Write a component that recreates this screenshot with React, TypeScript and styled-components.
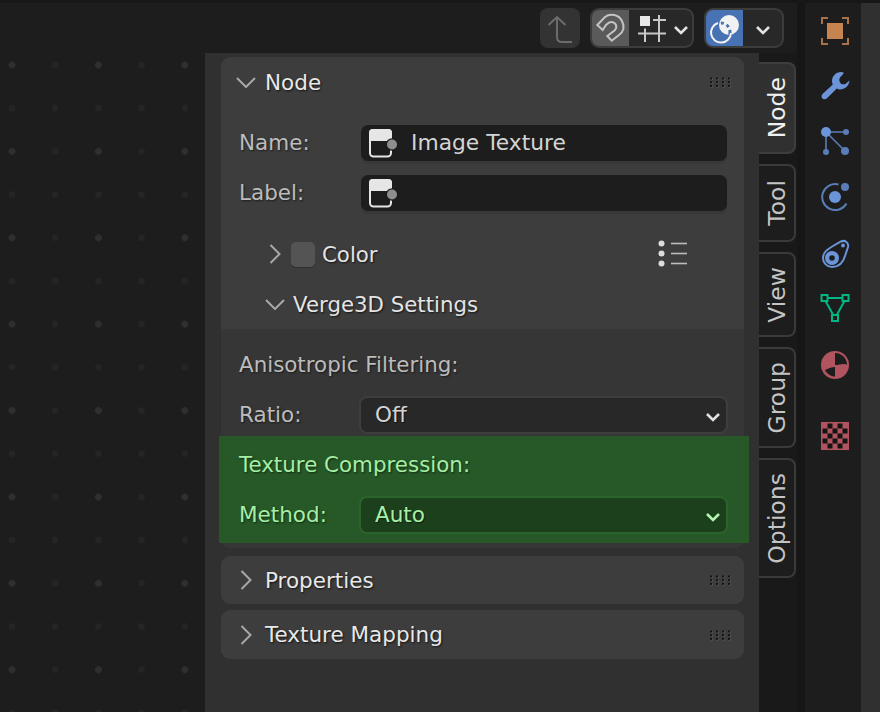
import React from "react";
import styled, { createGlobalStyle } from "styled-components";

const Global = createGlobalStyle`
  html, body { margin: 0; padding: 0; background: #1d1d1d; overflow: hidden; }
  #root { width: 880px; height: 712px; }
`;

const Screen = styled.div`
  width: 880px; height: 712px; display: flex; flex-direction: column; overflow: hidden;
  background: #1d1d1d; font-family: "DejaVu Sans", sans-serif; font-size: 21.5px; color: #d8d8d8;
`;
const TopLine = styled.div`height: 3px; flex: none; background: #171717;`;
const Workspace = styled.div`flex: 1; display: flex; min-height: 0;`;
const Editor = styled.div`width: 797px; flex: none; display: flex; flex-direction: column;`;
const Header = styled.div`
  height: 50px; flex: none; display: flex; justify-content: flex-end; align-items: flex-start;
  padding: 5px 13px 0 0; box-sizing: border-box; gap: 10px;
`;
const Body = styled.div`flex: 1; display: flex; min-height: 0;`;
const Canvas = styled.div`
  width: 205px; flex: none;
  background-color: #1d1d1d;
  background-image:
    radial-gradient(circle, #2f2f2f 3px, transparent 3.6px),
    radial-gradient(circle, #252525 3px, transparent 3.6px);
  background-size: 86.4px 86.4px, 43.2px 43.2px;
  background-position: -31.2px -31.2px, -9.6px -9.6px;
`;
const Sidebar = styled.div`
  width: 554px; flex: none; background: #303030; box-sizing: border-box;
  padding: 4px 15px 0 16px; display: flex; flex-direction: column;
`;
const Card = styled.section<{ $mt?: number }>`
  background: #3d3d3d; border-radius: 9px; margin-top: ${p => p.$mt ?? 0}px;
  display: flex; flex-direction: column;
`;
const CardHead = styled.div<{ $h: number }>`
  height: ${p => p.$h}px; display: flex; align-items: center; position: relative;
  color: #e8e8e8; text-shadow: 1px 1px 2px rgba(0,0,0,.7);
`;
const ChevronSlot = styled.span`
  width: 44px; flex: none; box-sizing: border-box; padding-left: 6px;
  display: flex; justify-content: center; align-items: center;
`;
const CardBody = styled.div`padding: 18px 17px 0 18px; display: flex; flex-direction: column; gap: 14px;`;
const FormRow = styled.div`display: flex; align-items: center; height: 36px;`;
const Label = styled.span<{ $green?: boolean }>`
  width: 122px; flex: none; margin-bottom: 2px; color: ${p => (p.$green ? "#a6eea6" : "#bcbcbc")};
  text-shadow: 1px 1px 2px rgba(0,0,0,.55);
`;
const TextField = styled.div`
  flex: 1; height: 36px; border-radius: 7px; background: #1d1d1d;
  box-shadow: 0 3px 0 #383838; display: flex; align-items: center; padding-left: 6px; gap: 12px;
  color: #d4d4d4;
`;
const FieldText = styled.span`margin-bottom: 2px; font-size: 21.8px;`;
const Tree = styled.div<{ $mt: number }>`
  display: flex; align-items: center; height: 36px; margin-top: ${p => p.$mt}px; font-size: 21.3px;
  padding-left: 35px; color: #e4e4e4; text-shadow: 1px 1px 2px rgba(0,0,0,.7);
`;
const TreeSlot = styled.span`width: 37px; flex: none; display: flex; justify-content: center; align-items: center;`;
const Swatch = styled.span`
  width: 24px; height: 25px; border-radius: 5px; background: #545454; margin: 0 7px 0 -2px;
  box-shadow: 0 1px 0 #303030;
`;
const ListIcon = styled.svg`margin-left: auto; margin-right: 56px; flex: none;`;
const Subpanel = styled.div`
  margin-top: 7px; background: #363636; padding-top: 18px; padding-bottom: 5px;
  border-radius: 0 0 9px 9px; display: flex; flex-direction: column;
`;
const Caption = styled.div<{ $green?: boolean }>`
  height: 36px; line-height: 36px; padding-left: 18px; font-size: 21.4px;
  color: ${p => (p.$green ? "#a6eea6" : "#bcbcbc")};
  text-shadow: 1px 1px 2px rgba(0,0,0,.55);
`;
const SelectRow = styled.div<{ $mt: number }>`
  display: flex; align-items: center; padding: 0 16px 0 18px; margin-top: ${p => p.$mt}px;
`;
const Select = styled.div<{ $green?: boolean }>`
  flex: 1; height: 38px; margin-left: -2px; box-sizing: border-box; border-radius: 8px; padding: 0 5px 2px 14px;
  display: flex; align-items: center; justify-content: space-between;
  background: ${p => (p.$green ? "#1c3f1c" : "#282828")};
  border: 2px solid ${p => (p.$green ? "#2b632d" : "#3e3e3e")};
  color: ${p => (p.$green ? "#a6eea6" : "#d4d4d4")};
  text-shadow: 1px 1px 1px rgba(0,0,0,.5);
`;
const SelectArrow = styled.span`display: flex; margin-top: 6px;`;
const GreenBlock = styled.div`
  margin: 2px -5px 0 -2px; padding: 11px 5px 9px 2px; background: #265927;
  display: flex; flex-direction: column;
`;
const Grip = styled.svg`position: absolute; right: 12px; top: 50%; transform: translateY(-50%);`;
const TabColumn = styled.div`
  width: 38px; flex: none; background: #191919; padding-top: 9px; box-sizing: border-box;
  display: flex; flex-direction: column; gap: 10px; align-items: flex-start;
`;
const Tab = styled.div<{ $h: number; $active?: boolean }>`
  width: 37px; height: ${p => p.$h}px; box-sizing: border-box; flex: none;
  border: 2px solid ${p => (p.$active ? "#3d3d3d" : "#3a3a3a")}; border-left: 0; border-radius: 0 8px 8px 0;
  background: ${p => (p.$active ? "#303030" : "#1d1d1d")};
  color: ${p => (p.$active ? "#f0f0f0" : "#c4c4c4")};
  display: flex; align-items: center; justify-content: center; font-size: 23.5px;
`;
const TabText = styled.span`writing-mode: vertical-rl; transform: rotate(180deg); white-space: nowrap;`;
const Gutter = styled.div`width: 8px; flex: none; background: #161616;`;
const Strip = styled.div`width: 56px; flex: none; background: #1d1d1d; display: flex; flex-direction: column;`;
const StripSlot = styled.div<{ $h: number }>`
  height: ${p => p.$h}px; flex: none; display: flex; align-items: center; justify-content: center;
  margin-left: 3px; box-sizing: border-box;
`;
const Scrollbar = styled.div`flex: 1; background: #303030;`;
const IconButton = styled.div`
  width: 40px; height: 40px; border-radius: 8px; background: #333333; box-sizing: border-box;
  display: flex; align-items: center; justify-content: center;
`;
const Group = styled.div`
  display: flex; height: 40px; border-radius: 9px; overflow: hidden; box-sizing: border-box;
  border: 2px solid #3c3c3c; background: #282828;
`;
const Segment = styled.div<{ $bg?: string; $w: number }>`
  width: ${p => p.$w}px; height: 100%; background: ${p => p.$bg ?? "transparent"};
  display: flex; align-items: center; justify-content: center; flex: none;
`;
const MenuSegment = styled.div<{ $w: number; $pl?: number }>`
  width: ${p => p.$w}px; height: 100%; box-sizing: border-box; flex: none;
  padding: 4px 0 0 ${p => p.$pl ?? 0}px; display: flex; align-items: center;
  justify-content: ${p => (p.$pl ? "flex-start" : "center")};
`;

const Chevron = ({ dir, c = "#a8a8a8" }: { dir: "down" | "right"; c?: string }) =>
  dir === "down" ? (
    <svg width="20" height="12" viewBox="0 0 20 12"><polyline points="1,2 10,11 19,2" fill="none" stroke={c} strokeWidth="2" /></svg>
  ) : (
    <svg width="12" height="20" viewBox="0 0 12 20"><polyline points="1.5,1 10.5,10 1.5,19" fill="none" stroke={c} strokeWidth="2" /></svg>
  );

const SmallChevron = ({ c = "#e2e2e2" }: { c?: string }) => (
  <svg width="16" height="10" viewBox="0 0 16 10"><polyline points="2,2 8,8 14,2" fill="none" stroke={c} strokeWidth="2.6" /></svg>
);

const GripDots = () => (
  <Grip width="24" height="14" viewBox="0 0 24 14">
    {[2, 8, 14, 20].flatMap(x =>
      [2.5, 6.2, 9.9].map(y => (
        <React.Fragment key={`${x}-${y}`}>
          <rect x={x + 0.7} y={y + 0.7} width="2" height="2" fill="#5a5a5a" />
          <rect x={x} y={y} width="2" height="2" fill="#141414" />
        </React.Fragment>
      ))
    )}
  </Grip>
);

const NodeFieldIcon = () => (
  <svg width="32" height="32" viewBox="0 0 32 32" style={{ flex: "none" }}>
    <rect x="3" y="3" width="21" height="26.5" rx="3.5" fill="none" stroke="#e6e6e6" strokeWidth="2" />
    <path d="M2 14 V5.5 A3.5 3.5 0 0 1 5.5 2 H21.5 A3.5 3.5 0 0 1 25 5.5 V14 Z" fill="#e6e6e6" />
    <circle cx="25" cy="17.5" r="6.2" fill="#1d1d1d" />
    <circle cx="25" cy="17.5" r="5" fill="#8e8e8e" />
  </svg>
);

const ObjectIcon = () => (
  <svg width="32" height="32" viewBox="0 0 32 32">
    <path d="M9 3 H3 V9 M23 3 H29 V9 M3 23 V29 H9 M29 23 V29 H23" fill="none" stroke="#a8724a" strokeWidth="2" />
    <rect x="8" y="8" width="16" height="16" fill="#c6854e" />
  </svg>
);
const WrenchIcon = () => (
  <svg width="32" height="32" viewBox="0 0 32 32">
    <path d="M22 2 C17 2 13 6 13 11 C13 12.5 13.4 13.6 13.8 14.6 L3.5 24 C2 25.5 2.5 27.5 3.5 28.5 C5 29.8 6.8 29.5 8 28.3 L17.8 18.6 C19 19.2 20 19.5 21 19.5 C26 19.5 30 16 30.5 10.5 L27 13.5 C25 15 22 14.5 21 12.5 C20 10.5 20 8.5 21.5 7 L25 3 C24 2.4 23 2 22 2Z" fill="#6b94d9" />
  </svg>
);
const ParticlesIcon = () => (
  <svg width="32" height="32" viewBox="0 0 32 32" fill="#6b94d9" stroke="#5a7db8">
    <path d="M7 6 H27 M7 6 V26 M7 6 L26 25" strokeWidth="1.6" fill="none" />
    <circle cx="7" cy="6" r="5" stroke="none" />
    <circle cx="27" cy="6" r="3" stroke="none" fill="#5a7db8" />
    <circle cx="7" cy="26" r="3" stroke="none" fill="#5a7db8" />
    <circle cx="26" cy="25" r="4" stroke="none" fill="#5a7db8" />
  </svg>
);
const PhysicsIcon = () => (
  <svg width="32" height="32" viewBox="0 0 32 32">
    <path d="M19.5 4.5 A13 13 0 1 0 27.5 23.5" fill="none" stroke="#5a7db8" strokeWidth="2" />
    <circle cx="16" cy="17" r="6" fill="#6b94d9" />
    <circle cx="26" cy="7" r="4" fill="#5a7db8" />
  </svg>
);
const ConstraintIcon = () => (
  <svg width="32" height="32" viewBox="0 0 32 32">
    <path d="M4 20 C4 14 9 11 14 8 L22 3.5 C26 1.5 30 5 29 9 L26 18 C24 25 19 29 13 29 C8 29 4 25 4 20 Z" fill="none" stroke="#6b94d9" strokeWidth="2" />
    <circle cx="13" cy="20" r="7" fill="#6b94d9" />
    <circle cx="13" cy="20" r="2.8" fill="#1d1d1d" />
    <circle cx="24" cy="7.5" r="2" fill="#6b94d9" />
  </svg>
);
const MeshIcon = () => (
  <svg width="32" height="32" viewBox="0 0 32 32" fill="none" stroke="#00b682" strokeWidth="2">
    <path d="M8 6 H24 M6.5 9 L14.5 23.5 M25.5 9 L17.5 23.5" />
    <rect x="2.5" y="3" width="6" height="6" />
    <rect x="23.5" y="3" width="6" height="6" />
    <rect x="13" y="23" width="6" height="6" />
  </svg>
);
const MaterialIcon = () => (
  <svg width="32" height="32" viewBox="0 0 32 32">
    <circle cx="16" cy="16" r="14" fill="#b0555f" />
    <path d="M16 4 A12 12 0 0 1 28 15.5 C 24 14 20 16 16 16 Z" fill="#1d1d1d" />
    <path d="M6 21 C 10 19 13 18 16 18 L16 27.5 C 12 27.5 8 25 6 21 Z" fill="#1d1d1d" />
  </svg>
);
const TextureIcon = () => {
  const cells: [number, number][] = [];
  for (let r = 0; r < 5; r++) for (let c = 0; c < 5; c++) if ((r + c) % 2 === 1) cells.push([c, r]);
  return (
    <svg width="32" height="32" viewBox="0 0 32 32">
      <rect x="2" y="2" width="28" height="28" fill="#b0555f" />
      {cells.map(([c, r]) => (
        <rect key={`${c}${r}`} x={3.5 + c * 5} y={3.5 + r * 5} width="5" height="5" fill="#141414" />
      ))}
    </svg>
  );
};

const ParentIcon = () => (
  <svg width="40" height="40" viewBox="0 0 40 40" fill="none" stroke="#6c6c6c" strokeWidth="2">
    <path d="M8.5 17 L17 9 L25.5 17 M17 9 V29 Q17 34 22 34 H32" />
  </svg>
);
const MagnetIcon = () => (
  <svg width="38" height="36" viewBox="0 0 38 36" fill="none" stroke="#c4c4c4" strokeWidth="2" style={{ flex: "none" }}>
    <path d="M5.3 15 L13 7 C18 3 27 4.5 30 11 C33 17 31 22 27 25 L19.7 30.7 L15.3 26 L22.5 20.5 C26 17 24 12 19 12 C17 12 16 13 14 15 L10.7 20 Z" />
  </svg>
);
const GridIcon = () => (
  <svg width="32" height="32" viewBox="0 0 32 32" style={{ marginRight: 3, flex: "none" }}>
    <rect x="2" y="2" width="10" height="10" fill="#e8e8e8" />
    <path d="M15 6 H28 M0 19.5 H28 M7 14.5 V28 M21 1 V28" fill="none" stroke="#c8c8c8" strokeWidth="2" />
  </svg>
);
const OverlayIcon = () => (
  <svg width="36" height="36" viewBox="0 0 36 36" style={{ flex: "none" }}>
    <circle cx="22" cy="15" r="10" fill="#f2f2f2" />
    <circle cx="14" cy="22" r="9" fill="none" stroke="#4772b3" strokeWidth="3" strokeDasharray="3 3" />
    <path d="M11 13 A10 10 0 1 0 24 23" fill="none" stroke="#f2f2f2" strokeWidth="2" />
  </svg>
);
const ListGlyph = () => (
  <ListIcon width="30" height="28" viewBox="0 0 30 28">
    {[3.5, 13.5, 23.5].map(y => (
      <React.Fragment key={y}>
        <circle cx="3.5" cy={y} r="3" fill="#dcdcdc" />
        <rect x="13" y={y - 0.8} width="16" height="1.6" fill="#bdbdbd" />
      </React.Fragment>
    ))}
  </ListIcon>
);

const tabs = [
  { t: "Node", h: 92, active: true },
  { t: "Tool", h: 78 },
  { t: "View", h: 85 },
  { t: "Group", h: 101 },
  { t: "Options", h: 120 },
];
const stripIcons: [number, React.ReactNode][] = [
  [55, <ObjectIcon key="a" />],
  [56, <WrenchIcon key="b" />],
  [56, <ParticlesIcon key="c" />],
  [52, <PhysicsIcon key="d" />],
  [64, <ConstraintIcon key="e" />],
  [44, <MeshIcon key="f" />],
  [70, <MaterialIcon key="g" />],
  [72, <TextureIcon key="h" />],
];

export default function App() {
  return (
    <Screen>
      <Global />
      <TopLine />
      <Workspace>
        <Editor>
          <Header>
            <IconButton><ParentIcon /></IconButton>
            <Group>
              <Segment $w={37} $bg="#5a5a5a"><MagnetIcon /></Segment>
              <MenuSegment $w={63} $pl={9}><GridIcon /><SmallChevron /></MenuSegment>
            </Group>
            <Group>
              <Segment $w={37} $bg="#4772b3"><OverlayIcon /></Segment>
              <MenuSegment $w={39}><SmallChevron /></MenuSegment>
            </Group>
          </Header>
          <Body>
            <Canvas />
            <Sidebar>
              <Card>
                <CardHead $h={50}>
                  <ChevronSlot><Chevron dir="down" /></ChevronSlot>
                  Node
                  <GripDots />
                </CardHead>
                <CardBody>
                  <FormRow>
                    <Label>Name:</Label>
                    <TextField><NodeFieldIcon /><FieldText>Image Texture</FieldText></TextField>
                  </FormRow>
                  <FormRow>
                    <Label>Label:</Label>
                    <TextField><NodeFieldIcon /></TextField>
                  </FormRow>
                </CardBody>
                <Tree $mt={25}>
                  <TreeSlot><Chevron dir="right" /></TreeSlot>
                  <Swatch />
                  Color
                  <ListGlyph />
                </Tree>
                <Tree $mt={14}>
                  <TreeSlot><Chevron dir="down" /></TreeSlot>
                  Verge3D Settings
                </Tree>
                <Subpanel>
                  <Caption>Anisotropic Filtering:</Caption>
                  <SelectRow $mt={13}>
                    <Label>Ratio:</Label>
                    <Select>Off<SelectArrow><SmallChevron /></SelectArrow></Select>
                  </SelectRow>
                  <GreenBlock>
                    <Caption $green>Texture Compression:</Caption>
                    <SelectRow $mt={13}>
                      <Label $green>Method:</Label>
                      <Select $green>Auto<SelectArrow><SmallChevron c="#b4f5b4" /></SelectArrow></Select>
                    </SelectRow>
                  </GreenBlock>
                </Subpanel>
              </Card>
              <Card $mt={8}>
                <CardHead $h={48}>
                  <ChevronSlot><Chevron dir="right" /></ChevronSlot>
                  Properties
                  <GripDots />
                </CardHead>
              </Card>
              <Card $mt={6}>
                <CardHead $h={49}>
                  <ChevronSlot><Chevron dir="right" /></ChevronSlot>
                  Texture Mapping
                  <GripDots />
                </CardHead>
              </Card>
            </Sidebar>
            <TabColumn>
              {tabs.map(t => (
                <Tab key={t.t} $h={t.h} $active={t.active}><TabText>{t.t}</TabText></Tab>
              ))}
            </TabColumn>
          </Body>
        </Editor>
        <Gutter />
        <Strip>
          {stripIcons.map(([h, icon], i) => (
            <StripSlot key={i} $h={h}>{icon}</StripSlot>
          ))}
        </Strip>
        <Scrollbar />
      </Workspace>
    </Screen>
  );
}
